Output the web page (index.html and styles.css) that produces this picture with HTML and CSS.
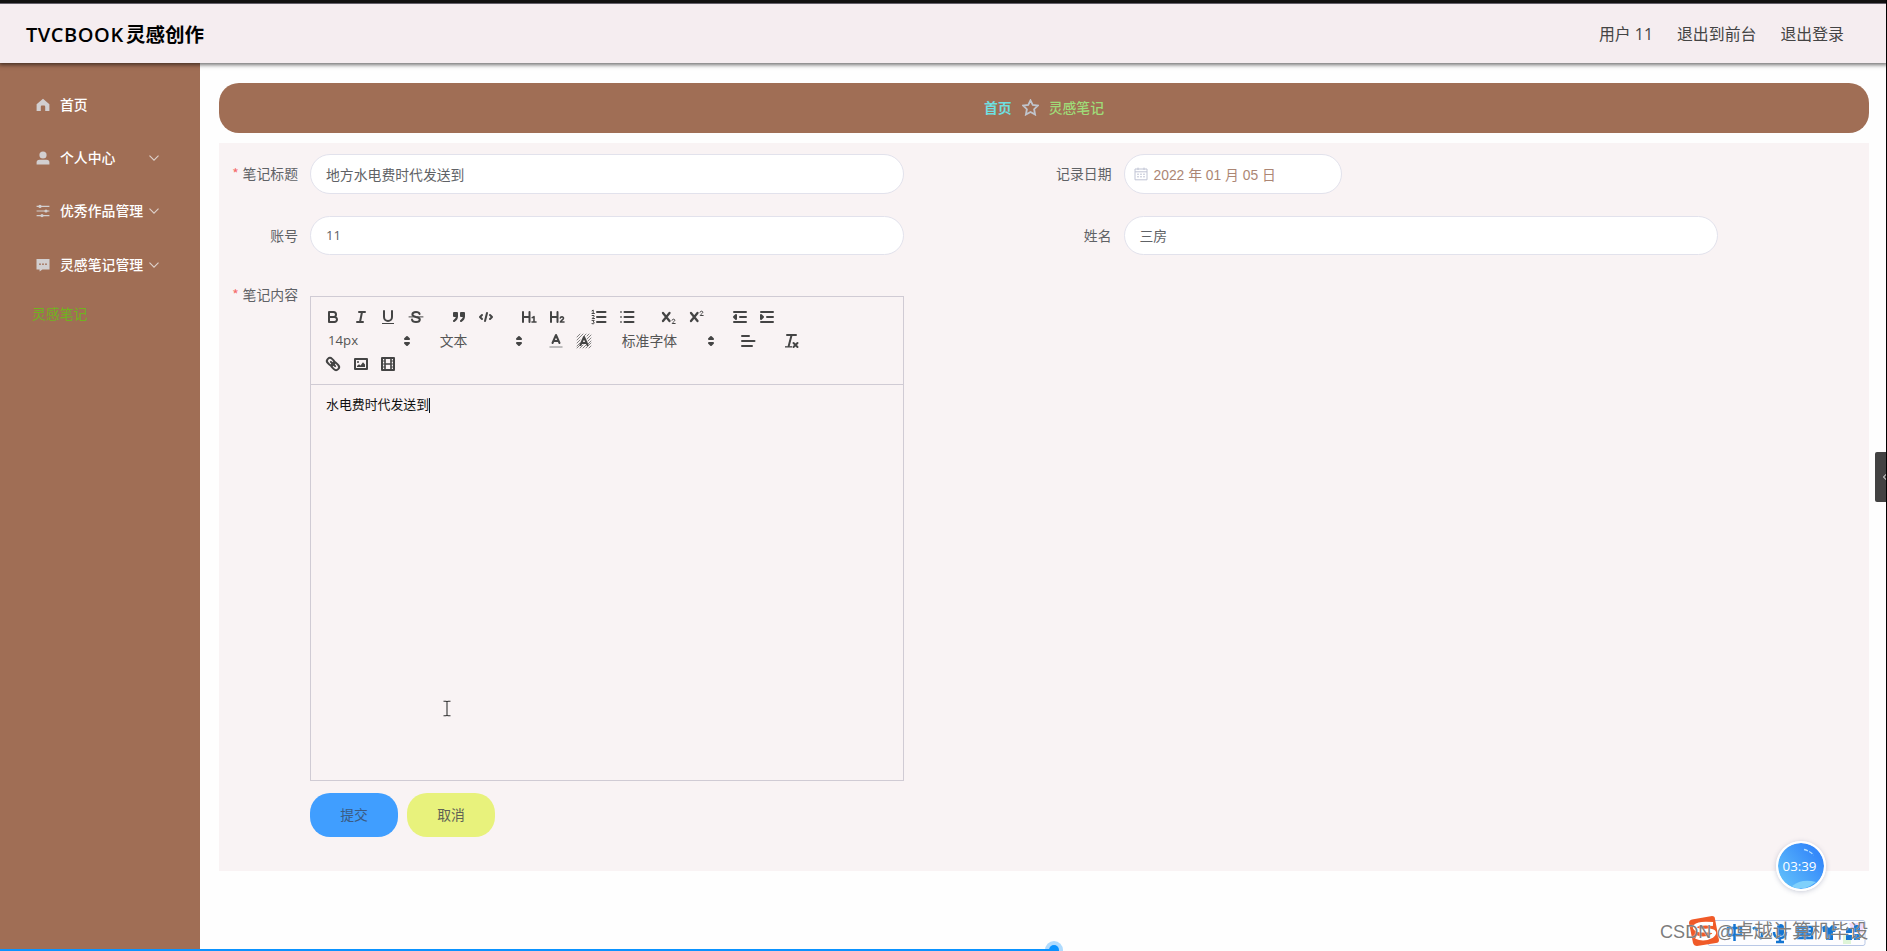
FILE: index.html
```
<!DOCTYPE html>
<html lang="zh-CN">
<head>
<meta charset="utf-8">
<title>TVCBOOK灵感创作</title>
<link rel="stylesheet" href="styles.css">
</head>
<body>
<div class="app">
  <header class="header">
    <h1 class="brand"><span class="brand-latin">TVCBOOK</span>灵感创作</h1>
    <nav class="user-nav"><span>用户 11</span><span>退出到前台</span><span>退出登录</span></nav>
  </header>
  <div class="body">
    <aside class="sidebar">
      <div class="menu-item">
        <svg class="menu-icon" viewBox="0 0 14 14"><path fill="currentColor" d="M7 .8 13.4 6.3V13H9.2V8.7Q9.2 7.6 8.2 7.6H5.8Q4.8 7.6 4.8 8.7V13H.6V6.3Z"/></svg>
        <span>首页</span>
      </div>
      <div class="menu-item">
        <svg class="menu-icon" viewBox="0 0 14 14"><circle cx="7" cy="4" r="3.6" fill="currentColor"/><path fill="currentColor" d="M.6 13.6V11.4Q.6 8.7 3.4 8.7H10.6Q13.4 8.7 13.4 11.4V13.6Z"/></svg>
        <span>个人中心</span>
        <svg class="chevron" viewBox="0 0 12 12"><path d="M1.5 3.7 6 8.2 10.5 3.7"/></svg>
      </div>
      <div class="menu-item">
        <svg class="menu-icon" viewBox="0 0 14 14"><path stroke="currentColor" stroke-width="1.1" d="M.6 2.4H13.4M.6 7H13.4M.6 11.6H13.4"/><g fill="currentColor"><circle cx="4" cy="2.4" r="1.6"/><circle cx="10" cy="7" r="1.6"/><circle cx="6" cy="11.6" r="1.6"/></g></svg>
        <span>优秀作品管理</span>
        <svg class="chevron" viewBox="0 0 12 12"><path d="M1.5 3.7 6 8.2 10.5 3.7"/></svg>
      </div>
      <div class="menu-item">
        <svg class="menu-icon" viewBox="0 0 14 14"><path fill="currentColor" d="M.5 1H13.5V11.4H6.4L3.6 13.6V11.4H.5Z"/><g fill="#a06e55"><circle cx="4" cy="6.2" r=".85"/><circle cx="7" cy="6.2" r=".85"/><circle cx="10" cy="6.2" r=".85"/></g></svg>
        <span>灵感笔记管理</span>
        <svg class="chevron" viewBox="0 0 12 12"><path d="M1.5 3.7 6 8.2 10.5 3.7"/></svg>
      </div>
      <div class="submenu-item">灵感笔记</div>
    </aside>
    <main class="main">
      <div class="breadcrumb">
        <span class="crumb-home">首页</span>
        <svg class="crumb-star" viewBox="0 0 16 16"><path d="M8 1.2 10.1 5.5 14.9 6.2 11.4 9.6 12.3 14.6 8 12.2 3.7 14.6 4.6 9.6 1.1 6.2 5.9 5.5Z"/></svg>
        <span class="crumb-current">灵感笔记</span>
      </div>
      <section class="form">
        <div class="form-row first-row">
          <div class="field"><label class="label required">笔记标题</label><div class="input">地方水电费时代发送到</div></div>
          <div class="field"><label class="label">记录日期</label>
            <div class="input date"><svg class="calendar" viewBox="0 0 14 14"><path fill="none" stroke="currentColor" d="M1 2H13V12.8H1ZM1 4.8H13M4 .6V3M10 .6V3"/><path stroke="currentColor" stroke-dasharray="2 1" d="M3 7.2H11.4M3 9.8H11.4"/></svg><span>2022 年 01 月 05 日</span></div>
          </div>
        </div>
        <div class="form-row second-row">
          <div class="field"><label class="label">账号</label><div class="input latin">11</div></div>
          <div class="field"><label class="label">姓名</label><div class="input">三房</div></div>
        </div>
        <div class="field editor-field">
          <label class="label required">笔记内容</label>
          <div class="editor">
            <div class="toolbar">
              <div class="tool-row">
                <div class="tools">
                  <i class="tool"><svg viewBox="0 0 18 18"><path d="M5 4H9.5A2.5 2.5 0 0 1 12 6.5 2.5 2.5 0 0 1 9.5 9H5ZM5 9H10.5A2.5 2.5 0 0 1 13 11.5 2.5 2.5 0 0 1 10.5 14H5Z"/></svg></i>
                  <i class="tool"><svg viewBox="0 0 18 18"><path d="M7 4H13M5 14H11M8 14 10 4"/></svg></i>
                  <i class="tool"><svg viewBox="0 0 18 18"><path d="M5 3V9A4 4 0 0 0 13 9V3"/><rect class="fill" x="3" y="15" width="12" height="1"/></svg></i>
                  <i class="tool"><svg viewBox="0 0 18 18"><path class="thin" d="M2 8.9H16"/><path d="M12.6 6C12.2 4.5 10.7 4 9 4 7 4 5.4 5 5.4 6.5 5.4 8 7 8.5 9 8.9 11.5 9.3 12.8 10 12.8 11.5 12.8 13.2 11.2 14 9 14 6.8 14 5.3 13.3 5 11.6"/></svg></i>
                </div>
                <div class="tools">
                  <i class="tool"><svg viewBox="0 0 18 18"><g class="fillstroke"><rect x="4" y="5" width="3" height="3"/><rect x="11" y="5" width="3" height="3"/></g><path d="M7 8C7 10.8 6 12 4 13M14 8C14 10.8 13 12 11 13"/></svg></i>
                  <i class="tool"><svg viewBox="0 0 18 18"><path d="M5 7 3 9 5 11M13 7 15 9 13 11M10 5 8 13"/></svg></i>
                </div>
                <div class="tools">
                  <i class="tool"><svg viewBox="0 0 18 18"><path d="M3 4V14M9.5 4V14M3 9H9.5"/><path class="mid" d="M12.2 9.6 14 8.7V14M12 14H16"/></svg></i>
                  <i class="tool"><svg viewBox="0 0 18 18"><path d="M3 4V14M9.5 4V14M3 9H9.5"/><path class="mid" d="M12.3 10C12.5 8.4 15.7 8.4 15.5 10.3 15.4 11.7 13 12.5 12.4 14H16"/></svg></i>
                </div>
                <div class="tools">
                  <i class="tool"><svg viewBox="0 0 18 18"><path d="M7 4H15.500M7 9H15.500M7 14H15.500"/><path class="thin" d="M2 2.800 3.200 2V5.500M2 5.500H4.400M2.100 7.500H4V8.600L2.200 10.500H4.500M2 12.400H4.200L3.200 13.900Q4.400 14 4.200 15.200 3.600 16.300 2 15.700"/></svg></i>
                  <i class="tool"><svg viewBox="0 0 18 18"><path d="M6.500 4H15.500M6.500 9H15.500M6.500 14H15.500"/><path class="mid" d="M2.800 4H3.200M2.800 9H3.200M2.800 14H3.200"/></svg></i>
                </div>
                <div class="tools">
                  <i class="tool"><svg viewBox="0 0 18 18"><path class="heavy" d="M3 5 9.500 13M9.500 5 3 13"/><path class="thin" d="M12 12.200C12.200 10.700 15 10.700 14.800 12.400 14.600 13.500 12.600 14.300 12.200 15.500H15.200"/></svg></i>
                  <i class="tool"><svg viewBox="0 0 18 18"><path class="heavy" d="M3 5 9.500 13M9.500 5 3 13"/><path class="thin" d="M12 4.200C12.200 2.700 15 2.700 14.800 4.400 14.600 5.500 12.600 6.300 12.200 7.500H15.200"/></svg></i>
                </div>
                <div class="tools">
                  <i class="tool"><svg viewBox="0 0 18 18"><path d="M3 4H15M9 9H15M3 14H15"/><path class="fillstroke" d="M5 7V11L3 9Z"/></svg></i>
                  <i class="tool"><svg viewBox="0 0 18 18"><path d="M3 4H15M9 9H15M3 14H15"/><path class="fillstroke" d="M3 7V11L5 9Z"/></svg></i>
                </div>
              </div>
              <div class="tool-row">
                <div class="picker"><span class="picker-latin">14px</span><svg viewBox="0 0 18 18"><path class="fillstroke" d="M7 11 9 13 11 11ZM7 7 9 5 11 7Z"/></svg></div>
                <div class="picker"><span>文本</span><svg viewBox="0 0 18 18"><path class="fillstroke" d="M7 11 9 13 11 11ZM7 7 9 5 11 7Z"/></svg></div>
                <div class="tools">
                  <i class="tool"><svg viewBox="0 0 18 18"><path class="faint" d="M3 15H15"/><path d="M5.500 11 9 3 12.500 11M6.500 9H11.500"/></svg></i>
                  <i class="tool"><svg viewBox="0 0 18 18"><path class="hatch" d="M2 5 5 2M2 8 8 2M2 11 5 8M2 14 5 11M2 16 6 12M5 16 8 13M8 16 11 13M11 16 16 11M14 16 16 14M9 4 11 2M12 4 14 2M12 7 16 3M13 9 16 6M13 12 16 9"/><path d="M5.500 13 9 5 12.500 13M6.500 11H11.500"/></svg></i>
                </div>
                <div class="picker font-picker"><span>标准字体</span><svg viewBox="0 0 18 18"><path class="fillstroke" d="M7 11 9 13 11 11ZM7 7 9 5 11 7Z"/></svg></div>
                <div class="tools"><i class="tool"><svg viewBox="0 0 18 18"><path d="M3 4H10M3 9H15.500M3 14H13"/></svg></i></div>
                <div class="tools"><i class="tool"><svg viewBox="0 0 18 18"><path d="M5 3H14M6.700 14 9.600 3M11.500 11 15.500 15M15.500 11 11.500 15"/><rect class="fill" x="3" y="14.200" width="7" height="1.300"/></svg></i></div>
              </div>
              <div class="tool-row">
                <div class="tools">
                  <i class="tool"><svg viewBox="0 0 18 18"><g transform="rotate(45 9 9)"><rect x="1.700" y="6" width="8.200" height="6" rx="3"/><rect x="8.100" y="6" width="8.200" height="6" rx="3"/><path d="M6 9H12"/></g></svg></i>
                  <i class="tool"><svg viewBox="0 0 18 18"><rect x="3" y="4" width="12" height="10"/><circle class="fill" cx="6" cy="7" r="1"/><path class="fill" d="M5 12V11L7 9.300 8.500 10.500 11 7.200 13 9.500V12Z"/></svg></i>
                  <i class="tool"><svg viewBox="0 0 18 18"><rect x="3" y="3" width="12" height="12"/><path class="mid" d="M6 3V15M12 3V15M6 9H12"/><path class="thin" d="M3 6H6M3 9H6M3 12H6M12 6H15M12 9H15M12 12H15"/></svg></i>
                </div>
              </div>
            </div>
            <div class="editor-content">水电费时代发送到<span class="caret"></span></div>
          </div>
        </div>
        <div class="actions"><button class="btn submit">提交</button><button class="btn cancel">取消</button></div>
      </section>
    </main>
  </div>
</div>

<svg class="text-cursor" viewBox="0 0 8 17"><path d="M.5 1.2H3L4 2 5 1.2H7.500M.5 15.800H3L4 15 5 15.800H7.500M4 2V15"/></svg>
<div class="drawer-handle"><svg viewBox="0 0 5 8"><path d="M4.500 1 1.500 4 4.500 7"/></svg></div>
<div class="timer"><svg viewBox="0 0 45 45"><path fill="#7fd0fb" d="M14 43Q24 35 38 39Q24 50 14 43Z"/><path fill="none" stroke="#b8e2ff" stroke-width="1.300" stroke-dasharray="4 1.500" d="M26 6.500Q32 8 35.500 12"/></svg><span>03:39</span></div>
<div class="ime">
  <svg viewBox="0 0 178 32">
    <rect x="19" y="5.500" width="157" height="25" rx="2" fill="#fdfdff" stroke="#b9c8e6"/>
    <path fill="#f0d9fa" d="M160 8h14v10h-10z"/><path fill="#dff5d8" d="M154 20h8v9h-8z"/>
    <path fill="#f05a28" d="M0 8Q0 5 3 4.500L23 1Q26 1 26 4L30 25Q30 28 27 28L8 31Q5 31 4 28Z"/>
    <path fill="none" stroke="#fff" stroke-width="3.800" d="M24 9Q5 7.500 6 13 8 16.500 19 15.500 29 16 23 21 15 25.500 7 22"/>
    <g fill="none" stroke="#1475d1" stroke-width="2.500"><path d="M39 13H52V20H39ZM45.500 9V26M64 14Q67 11 68 16M73 17V21L71 24"/><path d="M85 17Q85 23 91 23 97 23 97 17M91 23V27M87 27H95"/><rect x="109" y="12" width="14" height="11"/><path d="M109 16H123M109 19.500H123M114 12V23M118 12V23"/></g>
    <g fill="#1475d1"><rect x="88" y="9" width="7" height="12" rx="3.500"/><path d="M133 12 137 10 140 13 143 10 148 12 146 17 144 17V25H137V17L134 17Z"/><path d="M157 13h6v5h-6zM165 10h6v7h-6zM157 20h6v5h-6zM165 19h6v6h-6z"/></g>
  </svg>
</div>
<div class="watermark">CSDN @<span class="watermark-name">卓越计算机毕设</span></div>
<div class="progress"></div>
<div class="progress-dot"></div>
<div class="right-edge"></div>
</body>
</html>
```
FILE: styles.css
```
* { box-sizing: border-box; }
body {
  margin: 0;
  width: 1887px;
  height: 951px;
  position: relative;
  overflow: hidden;
  background: #fefefe;
  color: #606266;
  font: 13.85px/20px "Noto Sans CJK SC", sans-serif;
}
.app { display: flex; flex-direction: column; height: 951px; }
.header {
  position: relative;
  z-index: 1;
  flex: none;
  display: flex;
  align-items: center;
  justify-content: space-between;
  height: 63px;
  padding: 2px 43px 0 26px;
  border-top: 3px solid #111;
  background: #f5edf0;
  box-shadow: inset 0 1px #64606a, 0 1px 4px 1px rgba(0, 0, 0, .55);
}
.brand { margin: 0; font-size: 19.5px; line-height: 28px; font-weight: 700; color: #000; white-space: nowrap; }
.brand-latin { display: inline-block; width: 100px; font-family: "Open Sans", sans-serif; font-weight: 600; font-size: 20px; letter-spacing: .55px; }
.user-nav { display: flex; gap: 24px; font-family: "Open Sans", "Noto Sans CJK SC", sans-serif; font-size: 15.9px; color: #444; }
.body { display: flex; flex: 1; min-height: 0; }
.sidebar { flex: none; width: 200px; padding-top: 15px; background: #a06e55; color: #fff; }
.menu-item { display: flex; align-items: center; height: 53.4px; padding: 0 40px 0 36px; }
.menu-item span { white-space: nowrap; font-weight: 500; margin-top: -2px; }
.menu-icon { width: 14px; height: 14px; margin-right: 10px; color: #d2cfd0; flex: none; }
.chevron { width: 12px; height: 12px; margin-left: auto; fill: none; stroke: #ded2cc; stroke-width: 1.1; flex: none; }
.submenu-item { padding: 11px 0 0 32px; line-height: 20px; color: #6fb41e; }
.main { flex: 1; min-width: 0; padding: 20px 18px 0 19px; }
.breadcrumb {
  display: flex;
  align-items: center;
  justify-content: center;
  height: 49.5px;
  margin-bottom: 10px;
  border-radius: 20px;
  background: #a06e55;
}
.breadcrumb span { margin-top: -2px; }
.crumb-home { color: #6fdfe0; font-weight: 700; }
.crumb-star { width: 17px; height: 17px; margin: 0 10px; fill: none; stroke: #c0c4cc; stroke-width: 1.7; }
.crumb-current { color: #9fdc78; font-weight: 500; }
.form { height: 728.5px; padding: 11.5px 0 0 10px; background: #f9f3f4; }
.form-row { display: grid; grid-template-columns: 813.5px 1fr; }
.first-row { height: 62px; }
.second-row { height: 80px; }
.field { display: flex; align-items: flex-start; }
.label { width: 81px; padding-right: 12px; text-align: right; line-height: 38px; white-space: nowrap; flex: none; }
.required::before { content: "*"; color: #f56c6c; margin-right: 4px; }
.input { width: 594px; height: 40px; padding: 0 15px; line-height: 38px; border: 1px solid #e2e2ec; border-radius: 20px; background: #fff; }
.second-row .input { height: 39px; line-height: 37px; }
.second-row .latin { line-height: 36px; }
.latin { font-family: "Open Sans", sans-serif; font-size: 13px; }
.date { display: flex; align-items: center; width: 218px; padding: 0 9px; color: #ac8674; font-family: "Liberation Sans", "Noto Sans CJK SC", sans-serif; }
.date span { margin-top: 1px; }
.calendar { width: 14px; height: 14px; margin-right: 6px; color: #c0c4d4; }
.editor-field { height: 497px; }
.editor-field .label { margin-top: -21px; }
.editor { width: 594px; height: 485px; border: 1px solid #d0cbd4; }
.toolbar { height: 88px; padding: 8px; border-bottom: 1px solid #d0cbd4; }
.tool-row { display: flex; gap: 14.75px; height: 23.7px; align-items: center; }
.tools { display: flex; }
.tool { display: flex; justify-content: center; width: 27.75px; height: 24px; align-items: center; }
.toolbar svg { display: block; width: 18px; height: 18px; fill: none; stroke: #444; stroke-width: 2; stroke-linecap: round; stroke-linejoin: round; }
.toolbar .thin { stroke-width: 1; }
.toolbar .mid { stroke-width: 1.6; }
.toolbar .heavy { stroke-width: 2.3; }
.toolbar .faint { stroke: #aaa; stroke-width: 1.5; }
.toolbar .hatch { stroke-width: .8; stroke: #666; }
.toolbar .fill { fill: #444; stroke: none; }
.toolbar .fillstroke { fill: #444; }
.picker { display: flex; align-items: center; justify-content: space-between; width: 97px; padding-left: 9px; color: #555; }
.picker span { margin-top: -2px; }
.picker-latin { font-family: "Open Sans", sans-serif; font-size: 13.2px; }
.font-picker { width: 107px; }
.editor-content { display: flex; padding: 9px 15px; font-size: 12.9px; color: #111; }
.caret { width: 1px; height: 15px; margin-top: 4px; background: #111; }
.actions { display: flex; gap: 9px; padding-left: 81px; }
.btn { width: 88px; height: 44px; padding: 0 0 2px; border: 0; border-radius: 20px; font: inherit; }
.submit { background: #409eff; color: #3b5b83; }
.cancel { background: #e8f27c; color: #606256; }
.text-cursor { position: absolute; left: 442.5px; top: 700px; width: 8px; height: 17px; fill: none; stroke: #333; stroke-width: 1.1; }
.drawer-handle { position: absolute; left: 1875px; top: 452px; width: 11px; height: 50px; border-radius: 2px 0 0 2px; background: #424242; }
.drawer-handle svg { position: absolute; right: -1px; top: 21px; width: 5px; height: 8px; fill: none; stroke: #fff; }
.timer {
  position: absolute; left: 1775.5px; top: 841px; width: 50px; height: 50px;
  display: flex; align-items: center; justify-content: center;
  border: 2.5px solid #fff; border-radius: 50%;
  background: linear-gradient(50deg, #60bffb 10%, #3589fa 80%) padding-box;
  box-shadow: 0 1px 5px rgba(80, 90, 130, .3);
  color: #fff; font: 13.3px "Open Sans", sans-serif;
}
.timer svg { position: absolute; inset: 0; width: 45px; height: 45px; }
.timer span { position: relative; left: -1px; }
.ime { position: absolute; left: 1689px; top: 915px; width: 178px; height: 32px; }
.ime svg { display: block; width: 178px; height: 32px; }
.watermark { position: absolute; left: 1660px; top: 919px; font: 18.1px/26px "Liberation Sans", "Noto Sans CJK SC", sans-serif; color: rgba(112, 112, 112, .92); white-space: nowrap; text-shadow: 0 0 1px #fff; }
.watermark-name { font-size: 19.1px; }
.progress { position: absolute; left: 0; top: 949px; width: 1054px; height: 2px; background: #0a93ff; }
.progress-dot { position: absolute; left: 1049px; top: 945px; width: 10px; height: 10px; border-radius: 50%; background: #0a93ff; box-shadow: 0 0 0 4px rgba(10, 147, 255, .32); }
.right-edge { position: absolute; z-index: 2; left: 1886px; top: 0; width: 1px; height: 951px; background: #000; }
```
